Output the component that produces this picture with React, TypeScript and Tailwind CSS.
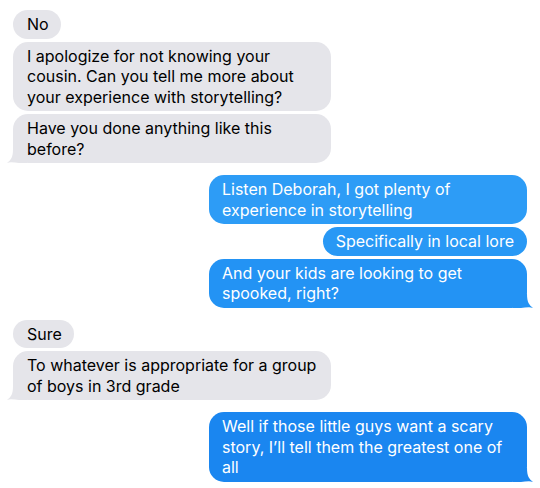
type Side = 'in' | 'out';

interface Message {
  side: Side;
  text: string;
  tail?: boolean;
  tone?: string;
}

const groups: Message[][] = [
  [
    { side: 'in', text: 'No' },
    {
      side: 'in',
      text: 'I apologize for not knowing your cousin. Can you tell me more about your experience with storytelling?',
    },
    { side: 'in', text: 'Have you done anything like this before?', tail: true },
  ],
  [
    {
      side: 'out',
      text: 'Listen Deborah, I got plenty of experience in storytelling',
      tone: 'bg-[#2d9cf6]',
    },
    { side: 'out', text: 'Specifically in local lore', tone: 'bg-[#2898f5]' },
    {
      side: 'out',
      text: 'And your kids are looking to get spooked, right?',
      tail: true,
      tone: 'bg-[#2393f4]',
    },
  ],
  [
    { side: 'in', text: 'Sure' },
    {
      side: 'in',
      text: 'To whatever is appropriate for a group of boys in 3rd grade',
      tail: true,
    },
  ],
  [
    {
      side: 'out',
      text: 'Well if those little guys want a scary story, I\u2019ll tell them the greatest one of all',
      tail: true,
      tone: 'bg-[#1a86f0]',
    },
  ],
];

const tailColor: Record<string, string> = {
  'bg-[#2393f4]': '#2393f4',
  'bg-[#1a86f0]': '#1a86f0',
};

function Tail({ side, color }: { side: Side; color: string }) {
  if (side === 'in') {
    return (
      <svg
        className="absolute -left-[6px] bottom-0"
        width="20"
        height="14"
        viewBox="0 0 20 14"
      >
        <path d="M20 0 L20 14 L12 14 C8 14 4 12.5 0 14 C4 11 6 8 6 0 Z" fill={color} />
      </svg>
    );
  }
  return (
    <svg
      className="absolute -right-[6px] bottom-0"
      width="20"
      height="14"
      viewBox="0 0 20 14"
    >
      <path d="M0 0 L0 14 L8 14 C12 14 16 12.5 20 14 C16 11 14 8 14 0 Z" fill={color} />
    </svg>
  );
}

function Bubble({ msg }: { msg: Message }) {
  const incoming = msg.side === 'in';
  return (
    <div className={`flex ${incoming ? 'justify-start' : 'justify-end'}`}>
      <div
        className={`relative max-w-[318px] rounded-[15px] py-[4px] text-[16px] leading-[20.5px] ${
          incoming
            ? 'bg-[#e5e5ea] pl-[14px] pr-[12px] text-black'
            : `${msg.tone} pl-[13px] pr-[13px] text-white`
        }`}
      >
        {msg.tail && (
          <Tail side={msg.side} color={incoming ? '#e5e5ea' : tailColor[msg.tone ?? ''] ?? '#2393f4'} />
        )}
        <span className="relative">{msg.text}</span>
      </div>
    </div>
  );
}

export default function App() {
  return (
    <div
      className="flex h-[488px] w-[540px] flex-col gap-[12px] overflow-hidden bg-white px-[13px] pt-[10px]"
      style={{ fontFamily: 'Inter, "Noto Sans", sans-serif' }}
    >
      {groups.map((group, i) => (
        <div key={i} className="flex flex-col gap-[3px]">
          {group.map((msg, j) => (
            <Bubble key={j} msg={msg} />
          ))}
        </div>
      ))}
    </div>
  );
}
